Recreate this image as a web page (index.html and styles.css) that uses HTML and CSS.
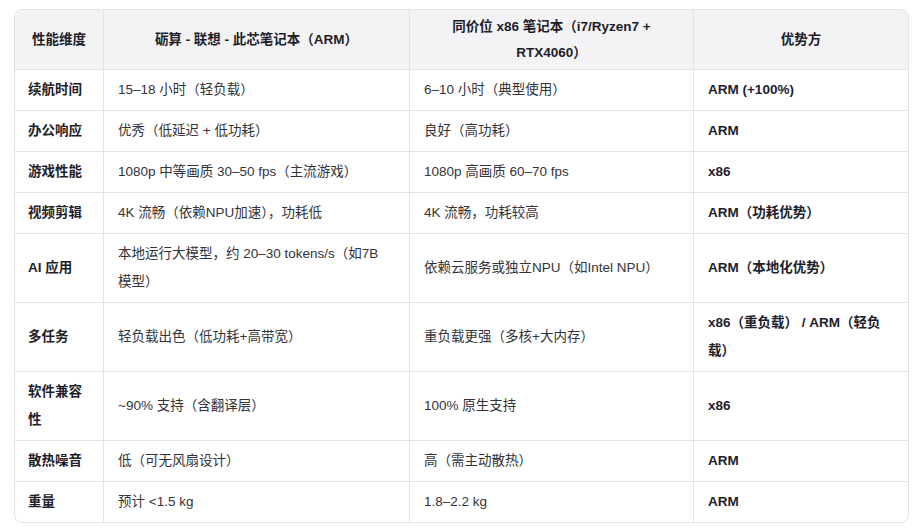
FILE: index.html
```html
<!DOCTYPE html>
<html lang="zh-CN">
<head>
<meta charset="utf-8">
<link rel="stylesheet" href="styles.css">
</head>
<body>
<div class="wrap">
  <div class="card">
    <table class="cmp">
      <colgroup>
        <col class="c1"><col class="c2"><col class="c3"><col class="c4">
      </colgroup>
      <thead>
        <tr>
          <th>性能维度</th>
          <th>砺算 - 联想 - 此芯笔记本（ARM）</th>
          <th>同价位 x86 笔记本（i7/Ryzen7 + RTX4060）</th>
          <th>优势方</th>
        </tr>
      </thead>
      <tbody>
        <tr><td class="k">续航时间</td><td>15–18 小时（轻负载）</td><td>6–10 小时（典型使用）</td><td class="k">ARM (+100%)</td></tr>
        <tr><td class="k">办公响应</td><td>优秀（低延迟 + 低功耗）</td><td>良好（高功耗）</td><td class="k">ARM</td></tr>
        <tr><td class="k">游戏性能</td><td>1080p 中等画质 30–50 fps（主流游戏）</td><td>1080p 高画质 60–70 fps</td><td class="k">x86</td></tr>
        <tr><td class="k">视频剪辑</td><td>4K 流畅（依赖NPU加速），功耗低</td><td>4K 流畅，功耗较高</td><td class="k">ARM（功耗优势）</td></tr>
        <tr><td class="k">AI 应用</td><td>本地运行大模型，约 20–30 tokens/s（如7B 模型）</td><td>依赖云服务或独立NPU（如Intel NPU）</td><td class="k">ARM（本地化优势）</td></tr>
        <tr><td class="k">多任务</td><td>轻负载出色（低功耗+高带宽）</td><td>重负载更强（多核+大内存）</td><td class="k">x86（重负载） / ARM（轻负载）</td></tr>
        <tr><td class="k">软件兼容性</td><td>~90% 支持（含翻译层）</td><td>100% 原生支持</td><td class="k">x86</td></tr>
        <tr><td class="k">散热噪音</td><td>低（可无风扇设计）</td><td>高（需主动散热）</td><td class="k">ARM</td></tr>
        <tr class="last"><td class="k">重量</td><td>预计 &lt;1.5 kg</td><td>1.8–2.2 kg</td><td class="k">ARM</td></tr>
      </tbody>
    </table>
  </div>
</div>
</body>
</html>
```

FILE: styles.css
```css
* { box-sizing: border-box; }
html, body { margin: 0; padding: 0; background: #ffffff; }
body {
  font-family: "Liberation Sans", "Noto Sans CJK SC", sans-serif;
  font-size: 13.5px;
  color: #333338;
}
.wrap { padding: 9px 8px 0 14px; }
.card {
  width: 895px;
  border: 1px solid #e3e3e6;
  border-radius: 8px;
  overflow: hidden;
}
.cmp {
  width: 100%;
  table-layout: fixed;
  border-collapse: separate;
  border-spacing: 0;
}
.c1 { width: 89px; }
.c2 { width: 306px; }
.c3 { width: 284px; }
.c4 { width: auto; }
th {
  background: #f3f3f5;
  font-weight: 700;
  color: #1e1e2a;
  text-align: center;
  line-height: 26px;
  padding: 4px 14px 3px;
  border-right: 1px solid #e3e3e6;
  border-bottom: 1px solid #e3e3e6;
}
td {
  line-height: 28px;
  padding: 6px 14px 6px 14px;
  text-align: left;
  vertical-align: middle;
  border-right: 1px solid #e3e3e6;
  border-bottom: 1px solid #e3e3e6;
}
th:last-child, td:last-child { border-right: 0; }
.last td { border-bottom: 0; }
td:first-child { padding-left: 13px; padding-right: 13px; }
td.k { font-weight: 700; color: #1e1e2a; }
```
